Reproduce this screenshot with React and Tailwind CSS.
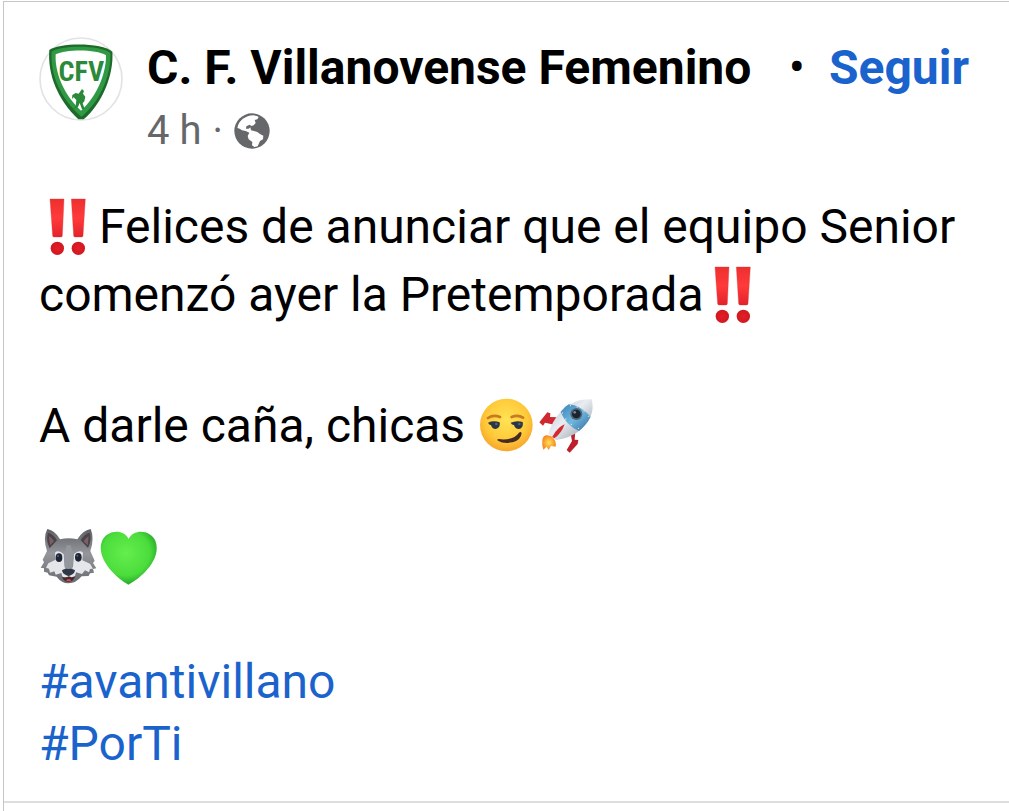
const emojiClass = "inline-block h-15 w-15 align-[-14px]";

const TeamCrest = () => (
  <svg
    viewBox="27 22 252 252"
    className="h-21 w-21 shrink-0"
    role="img"
    aria-label="C. F. Villanovense"
  >
    <circle cx="153" cy="148" r="123" fill="#fff" stroke="#e2e3e5" strokeWidth="5" />
    <path
      d="M58 61C84 39 217 37 247 66C252 132 218 220 161 269H145C82 210 52 132 58 61Z"
      fill="#1d6a2b"
    />
    <path
      d="M65 66C92 46 212 45 241 70C244 130 213 215 154 261C90 206 60 132 65 66Z"
      fill="#2f9a43"
    />
    <path
      d="M77 74C108 59 198 58 228 77C229 128 202 200 153 243C102 197 74 130 77 74Z"
      fill="#fff"
    />
    <text
      x="154"
      y="155"
      textAnchor="middle"
      fill="#2b8a3a"
      fontFamily="'Roboto Condensed', 'Open Sans Condensed', 'Liberation Sans Narrow', Roboto, sans-serif"
      fontWeight="700"
      fontSize="84"
    >
      CFV
    </text>
    <path
      d="M156 178l6 6-3 8 7 9-3 14-5 6 6 17-8 1-7-19-5 12-12 10-3-4 8-9 2-18-8-8-5 5 1-12 10-6 9 2z"
      fill="#2b8a3a"
    />
  </svg>
);

const Globe = () => (
  <svg viewBox="282 32 108 108" className="h-9 w-9" role="img" aria-label="Público">
    <circle cx="336" cy="86" r="53" fill="#65676b" />
    <path
      d="M292 77C296 54 316 40 340 39Q352 40 356 44L352 51L344 53L347 62L341 69L334 71L329 67L319 72L318 79L326 79L331 75L333 84L342 86L352 89L360 95L370 100L369 111L360 116L353 132L343 134L336 129L337 119L326 111L323 101L328 91L317 86L306 84L299 79Z"
      fill="#fff"
    />
  </svg>
);

const DoubleBang = () => (
  <svg viewBox="30 36 180 180" className={emojiClass} role="img" aria-label="‼️">
    <defs>
      <linearGradient id="bang" x1="0" y1="0" x2="0" y2="1">
        <stop offset="0" stopColor="#ee2f2f" />
        <stop offset=".5" stopColor="#ff3a3a" />
        <stop offset="1" stopColor="#e3222b" />
      </linearGradient>
      <radialGradient id="bangDot">
        <stop offset="0" stopColor="#e51e28" />
        <stop offset="1" stopColor="#cf1820" />
      </radialGradient>
    </defs>
    <path
      d="M63 42h42l-5 111q-1 3-4 3H75q-3 0-4-3zM127 42h42l-7 111q-1 3-4 3h-20q-3 0-4-3z"
      fill="url(#bang)"
      stroke="#d93535"
      strokeWidth="1"
    />
    <circle cx="85" cy="190" r="20" fill="url(#bangDot)" />
    <circle cx="148" cy="190" r="20" fill="url(#bangDot)" />
  </svg>
);

const Smirk = () => (
  <svg viewBox="20 19 180 180" className={emojiClass} role="img" aria-label="😏">
    <defs>
      <radialGradient id="face" cx=".5" cy=".4" r=".6">
        <stop offset="0" stopColor="#ffe354" />
        <stop offset=".65" stopColor="#ffca3a" />
        <stop offset="1" stopColor="#f7a52a" />
      </radialGradient>
    </defs>
    <circle cx="108" cy="106" r="79" fill="url(#face)" />
    <path
      d="M53 85Q69 74 89 82M124 82Q143 74 158 84"
      fill="none"
      stroke="#c97a20"
      strokeWidth="8"
      strokeLinecap="round"
    />
    <path
      d="M53 99Q70 91 88 98Q91 115 76 118Q65 118 62 106Q57 107 53 99ZM121 99Q139 91 157 97Q160 115 146 118Q134 118 131 106Q124 106 121 99Z"
      fill="#2b3546"
    />
    <circle cx="78" cy="103" r="4" fill="#52637c" />
    <circle cx="147" cy="103" r="4" fill="#52637c" />
    <path
      d="M84 148Q128 154 146 129Q151 124 154 130Q152 151 127 158Q99 163 83 153Q79 149 84 148Z"
      fill="#442b24"
    />
  </svg>
);

const Rocket = () => (
  <svg viewBox="200 19 180 180" className={emojiClass} role="img" aria-label="🚀">
    <defs>
      <linearGradient id="hull" x1="0" y1="0" x2="1" y2="1">
        <stop offset="0" stopColor="#b4bcc6" />
        <stop offset=".45" stopColor="#e9edf2" />
        <stop offset="1" stopColor="#88919e" />
      </linearGradient>
      <linearGradient id="band" x1="0" y1="0" x2="1" y2="1">
        <stop offset="0" stopColor="#3e82b7" />
        <stop offset=".5" stopColor="#70b8df" />
        <stop offset="1" stopColor="#326a9d" />
      </linearGradient>
      <radialGradient id="flame">
        <stop offset="0" stopColor="#ffe05a" />
        <stop offset="1" stopColor="#f68a20" />
      </radialGradient>
    </defs>
    <path
      d="M231 137Q218 136 216 152Q214 164 219 180L229 171L235 181L242 169L256 171Q259 152 244 140Z"
      fill="url(#flame)"
    />
    <path d="M264 83L239 82L240 71L231 68L207 98L218 108L224 99L252 105Z" fill="#cf2830" />
    <path d="M301 132L305 154L289 181L298 189L322 163L324 151L313 150L315 122Z" fill="#bd202b" />
    <path
      d="M364 29Q378 80 326 124Q300 145 257 151L234 133Q245 94 271 66Q310 25 364 29Z"
      fill="url(#hull)"
    />
    <path d="M295 44Q330 45 361 81Q350 104 326 124Q285 105 271 66Q282 52 295 44Z" fill="url(#band)" />
    <path d="M283 104Q263 111 246 141L252 146Q273 132 283 104Z" fill="#d52830" />
    <circle cx="318" cy="73" r="18" fill="#536372" />
    <circle cx="318" cy="73" r="13" fill="#192431" />
    <circle cx="313" cy="68" r="4" fill="#778796" />
    <path
      d="M300 48h1M320 52h1M341 64h1M355 80h1M276 70h1M286 88h1M303 104h1M324 116h1"
      stroke="#e8f6ff"
      strokeWidth="3"
      strokeLinecap="round"
    />
  </svg>
);

const Wolf = () => (
  <svg viewBox="28 18 180 180" className={emojiClass} role="img" aria-label="🐺">
    <defs>
      <linearGradient id="fur" x1="0" y1="0" x2="0" y2="1">
        <stop offset="0" stopColor="#5d6066" />
        <stop offset=".45" stopColor="#94969b" />
        <stop offset="1" stopColor="#686b70" />
      </linearGradient>
    </defs>
    <path
      d="M53 27Q76 31 91 58Q117 51 143 58Q159 31 183 27Q195 55 182 93L195 122L190 129L200 145L190 147L193 158L181 160L177 168L156 169Q139 190 116 190Q95 189 81 170L58 166L54 158L43 155L43 145L33 143L43 127L39 119L52 93Q39 54 53 27Z"
      fill="url(#fur)"
    />
    <path
      d="M55 38Q72 43 82 61L60 85Q48 61 55 38ZM180 38Q162 43 153 61L175 84Q187 61 180 38Z"
      fill="#4b4348"
    />
    <path d="M58 49Q67 53 73 64L61 76ZM177 49Q168 53 162 64L174 76Z" fill="#796067" />
    <path
      d="M76 98Q87 88 102 103L105 141L116 149L130 140L133 102Q149 88 160 98L158 121L181 131L190 146L181 147L178 157L166 151L157 162L139 157Q135 182 117 183Q99 182 95 159L78 164L74 154L61 158L58 146L49 143L56 130L78 119Z"
      fill="#e4e6ea"
    />
    <path d="M103 104L111 76H123L132 104L128 147H106Z" fill="#94979d" />
    <ellipse cx="88" cy="113" rx="10" ry="13" fill="#1e2635" />
    <ellipse cx="146" cy="112" rx="10" ry="13" fill="#1e2635" />
    <circle cx="85" cy="108" r="3" fill="#52637c" />
    <circle cx="143" cy="107" r="3" fill="#52637c" />
    <path
      d="M97 151Q104 145 116 147Q129 145 136 151Q135 161 123 166Q117 170 110 166Q98 161 97 151Z"
      fill="#303847"
    />
    <path d="M97 170Q111 174 117 169Q125 174 137 169Q132 184 117 186Q101 184 97 170Z" fill="#49292f" />
    <ellipse cx="117" cy="181" rx="7" ry="3" fill="#e34d55" />
  </svg>
);

const GreenHeart = () => (
  <svg viewBox="208 18 180 180" className={emojiClass} role="img" aria-label="💚">
    <defs>
      <radialGradient id="heart" cx=".45" cy=".4" r=".65">
        <stop offset="0" stopColor="#65ee4d" />
        <stop offset=".65" stopColor="#4bdd3c" />
        <stop offset="1" stopColor="#1e9b27" />
      </radialGradient>
    </defs>
    <path
      d="M297 57C282 27 235 28 218 61C196 113 257 172 296 194C342 169 397 113 377 62C361 28 311 27 297 57Z"
      fill="url(#heart)"
    />
  </svg>
);

const App = () => {
  return (
    <main className="min-h-screen bg-white pl-[3px] pt-px font-['Roboto',sans-serif] text-black">
      <div className="min-h-[calc(100vh-1px)] border-l border-t border-[#c6c6c6]">
        <article className="border-b-2 border-[#dedede] pb-[26px] pl-[35px] pr-10 pt-[35px]">
          <header className="flex items-start gap-6">
            <TeamCrest />
            <div className="min-w-0 flex-1">
              <div className="flex items-center justify-between">
                <h1 className="whitespace-nowrap text-5xl font-bold leading-[62px]">
                  C. F. Villanovense Femenino
                </h1>
                <div className="flex items-center gap-6">
                  <span className="text-5xl leading-[62px]">•</span>
                  <button type="button" className="text-5xl font-bold leading-[62px] text-[#1b63cc]">
                    Seguir
                  </button>
                </div>
              </div>
              <div className="flex items-center gap-[11px] text-[40px] leading-16 text-[#65676b]">
                <span>4 h</span>
                <span>·</span>
                <Globe />
              </div>
            </div>
          </header>

          <div className="mt-[30px] text-5xl">
            <p className="leading-17">
              <DoubleBang />
              Felices de anunciar que el equipo Senior comenzó ayer la Pretemporada
              <DoubleBang />
            </p>
            <p className="mt-16 leading-[66px]">
              A darle caña, chicas <Smirk />
              <Rocket />
            </p>
            <p className="mt-16 leading-[66px]">
              <Wolf />
              <GreenHeart />
            </p>
            <p className="mt-[62px] flex flex-col items-start leading-[62px] text-[#1b63cc]">
              <a href="#avantivillano">#avantivillano</a>
              <a href="#PorTi">#PorTi</a>
            </p>
          </div>
        </article>
      </div>
    </main>
  );
};

export default App;
